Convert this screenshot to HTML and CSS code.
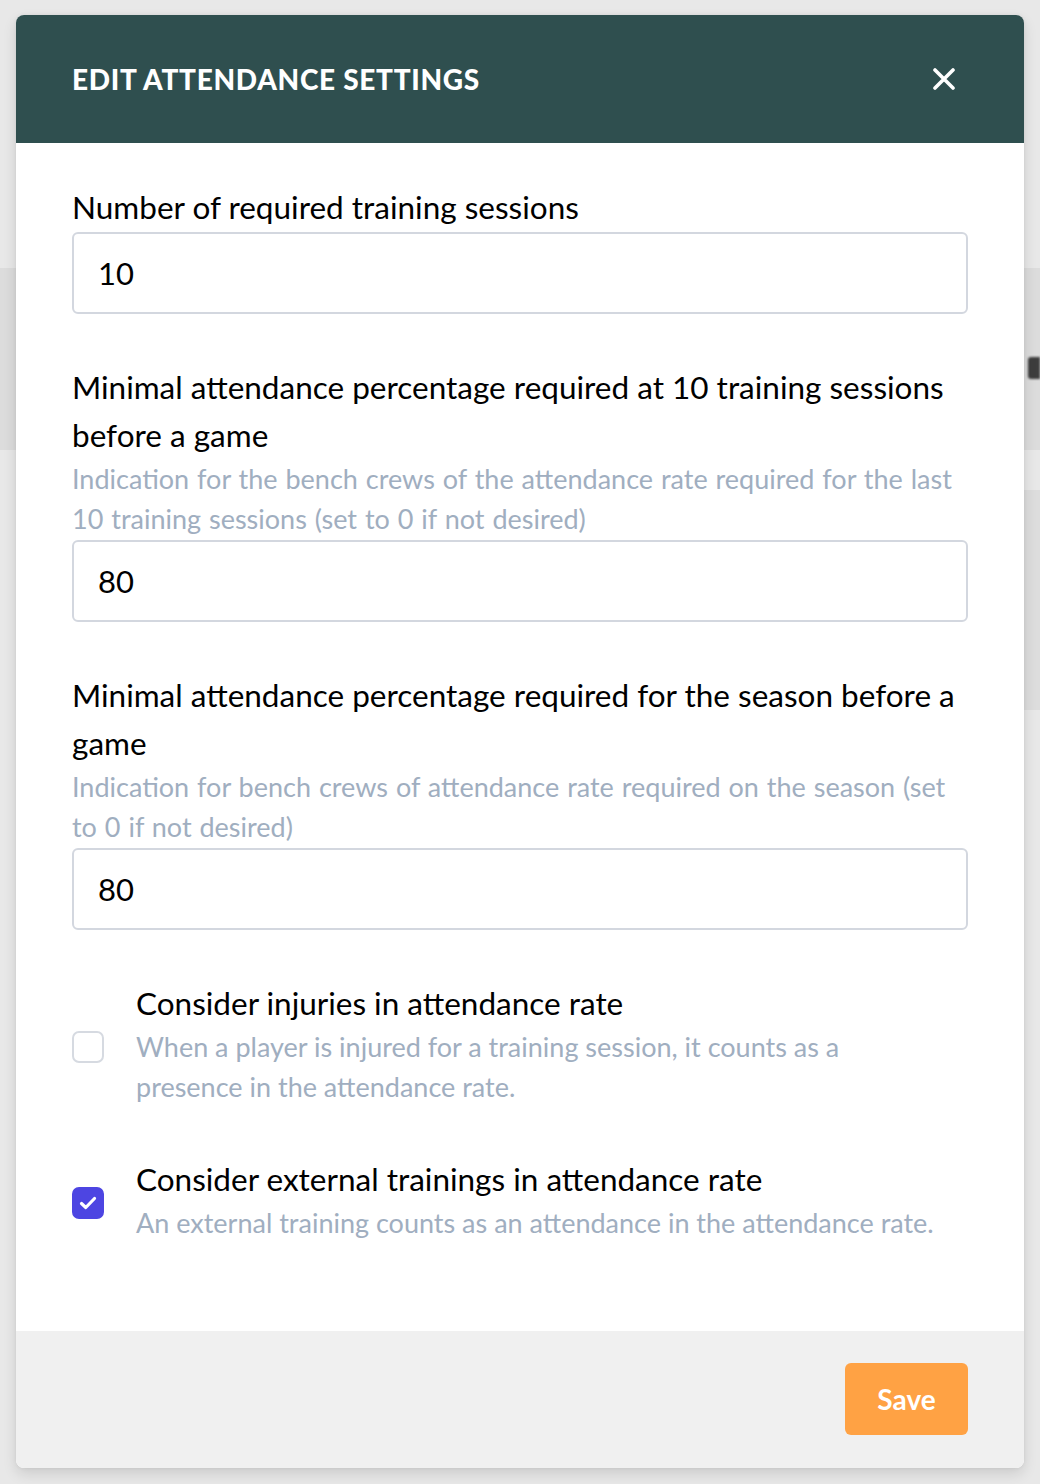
FILE: index.html
```html
<!DOCTYPE html>
<html lang="en">
<head>
<meta charset="utf-8">
<title>Edit attendance settings</title>
<link rel="stylesheet" href="styles.css">
</head>
<body>
<div class="backdrop">
  <div class="bg-spacer"></div>
  <div class="bg-band"><span class="bg-glyph"></span></div>
  <div class="bg-card"></div>
</div>

<div class="modal">
  <header class="modal-header">
    <h1 class="modal-title">Edit attendance settings</h1>
    <button class="close-btn" aria-label="Close">
      <svg width="22" height="22" viewBox="0 0 22 22"><path d="M2 2L20 20M20 2L2 20" stroke="#fff" stroke-width="3.6" stroke-linecap="round"/></svg>
    </button>
  </header>

  <div class="modal-body">
    <div class="field">
      <label class="field-label">Number of required training sessions</label>
      <div class="text-input">10</div>
    </div>

    <div class="field">
      <label class="field-label">Minimal attendance percentage required at 10 training sessions before a game</label>
      <p class="field-hint">Indication for the bench crews of the attendance rate required for the last 10 training sessions (set to 0 if not desired)</p>
      <div class="text-input">80</div>
    </div>

    <div class="field">
      <label class="field-label">Minimal attendance percentage required for the season before a game</label>
      <p class="field-hint">Indication for bench crews of attendance rate required on the season (set to 0 if not desired)</p>
      <div class="text-input">80</div>
    </div>

    <div class="check-row">
      <span class="checkbox"></span>
      <div class="check-text">
        <div class="field-label">Consider injuries in attendance rate</div>
        <p class="field-hint">When a player is injured for a training session, it counts as a presence in the attendance rate.</p>
      </div>
    </div>

    <div class="check-row">
      <span class="checkbox checked">
        <svg width="18" height="14" viewBox="0 0 18 14"><path d="M2.5 7.5L6.8 11.5L15.5 2.5" fill="none" stroke="#fff" stroke-width="3.2" stroke-linecap="round" stroke-linejoin="round"/></svg>
      </span>
      <div class="check-text">
        <div class="field-label">Consider external trainings in attendance rate</div>
        <p class="field-hint">An external training counts as an attendance in the attendance rate.</p>
      </div>
    </div>
  </div>

  <footer class="modal-footer">
    <button class="save-btn">Save</button>
  </footer>
</div>
</body>
</html>
```

FILE: styles.css
```css
* { box-sizing: border-box; }

html, body {
  margin: 0;
  padding: 0;
}

body {
  width: 1040px;
  height: 1484px;
  background: #e8e8e8;
  font-family: "Lato", "Open Sans", sans-serif;
  color: #000;
  overflow: hidden;
  position: relative;
}

.backdrop {
  display: flex;
  flex-direction: column;
}

.bg-spacer { height: 268px; }

.bg-band {
  height: 182px;
  background: #dcdcdc;
  display: flex;
  justify-content: flex-end;
  align-items: flex-start;
  padding-top: 89px;
}

.bg-glyph {
  width: 12px;
  height: 22px;
  background: #3d3d3d;
  border-radius: 3px 0 0 3px;
  filter: blur(0.8px);
}

.bg-card {
  margin-top: 40px;
  margin-left: auto;
  width: 60px;
  height: 220px;
  background: #dddddd;
}

.modal {
  position: absolute;
  top: 15px;
  left: 16px;
  width: 1008px;
  background: #fff;
  border-radius: 8px;
  overflow: hidden;
  box-shadow: 0 6px 14px rgba(0, 0, 0, 0.12), 0 0 4px rgba(0, 0, 0, 0.06);
}

.modal-header {
  height: 128px;
  background: #2f4f4f;
  display: flex;
  align-items: center;
  justify-content: space-between;
  padding: 0 56px;
}

.modal-title {
  margin: 0;
  color: #fff;
  font-size: 28px;
  font-weight: 900;
  text-transform: uppercase;
  letter-spacing: 0.7px;
  line-height: 1;
}

.close-btn {
  background: none;
  border: 0;
  padding: 0;
  margin-right: 13px;
  display: flex;
  cursor: pointer;
}

.modal-body {
  padding: 40px 56px 88px;
  display: flex;
  flex-direction: column;
}

.field {
  display: flex;
  flex-direction: column;
  margin-bottom: 49px;
}

.field-label {
  display: block;
  font-size: 31.5px;
  line-height: 48px;
  margin-bottom: 1px;
}

.field-hint {
  margin: -1px 0 1px;
  font-size: 27px;
  line-height: 40px;
  color: #a0aec0;
  word-spacing: 1px;
}

.text-input {
  height: 82px;
  border: 2px solid #d3d7df;
  border-radius: 6px;
  padding: 0 24px;
  display: flex;
  align-items: center;
  font-size: 31px;
}

.check-row {
  display: flex;
  align-items: center;
  gap: 32px;
}

.check-row + .check-row { margin-top: 48px; }

.checkbox {
  flex: none;
  width: 32px;
  height: 32px;
  border: 2px solid #d6dae1;
  border-radius: 7px;
  display: flex;
  align-items: center;
  justify-content: center;
  margin-top: 8px;
}

.checkbox.checked {
  background: #4d45e2;
  border-color: #4d45e2;
}

.check-text {
  flex: 1;
  padding-right: 26px;
}

.check-text .field-label { margin-bottom: 0; }
.check-text .field-hint { margin: 0; word-spacing: 0; }

.modal-footer {
  background: #f0f0f0;
  display: flex;
  justify-content: flex-end;
  padding: 32px 56px 33px;
}

.save-btn {
  width: 123px;
  height: 72px;
  background: #ffa244;
  border: 0;
  border-radius: 6px;
  color: #fff;
  font-family: "Lato", sans-serif;
  font-weight: 700;
  font-size: 28px;
  cursor: pointer;
}
```
